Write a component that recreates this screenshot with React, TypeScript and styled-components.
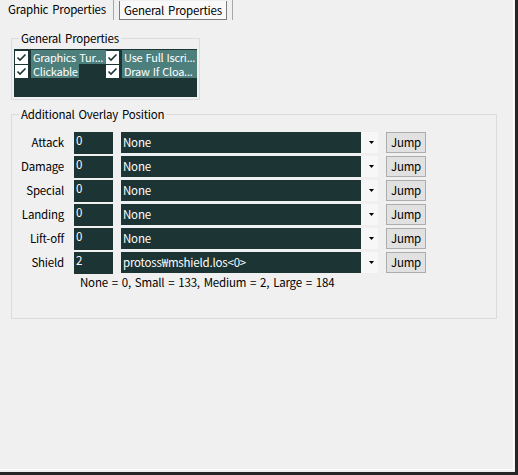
import React from "react";
import styled, { createGlobalStyle } from "styled-components";

const Global = createGlobalStyle`
  html, body { margin: 0; padding: 0; background: #f0f0f0; }
  body {
    font-family: "Noto Sans CJK KR", "Noto Sans", sans-serif;
    font-size: 11.5px;
    letter-spacing: -0.2px;
    word-spacing: 1.5px;
    color: #000;
  }
  * { box-sizing: border-box; }
`;

const DARK = "#1c3433";
const HILITE = "#4d807d";

const Window = styled.div`
  width: 518px;
  height: 475px;
  background: #f0f0f0;
  border-right: 3px solid #262626;
  border-bottom: 3px solid #262626;
`;

const Panel = styled.div`
  width: 514px;
  height: 470px;
  border-right: 1px solid #ffffff;
  border-bottom: 1px solid #ffffff;
  display: flex;
  flex-direction: column;
`;

const TabStrip = styled.div`
  height: 20px;
  display: flex;
  align-items: stretch;
`;

const Tab = styled.div<{ $active?: boolean }>`
  display: flex;
  align-items: center;
  line-height: 16px;
  white-space: nowrap;
  flex: none;
  ${(p) =>
    p.$active
      ? `
    padding: 0 5px 0 5px;
    border-left: 1px solid #a8a8a8;
    border-right: 1px solid #a8a8a8;
    background: #f0f0f0;
  `
      : `
    padding: 0 0 3px 8px;
    width: 113px;
    overflow: visible;
  `}
`;

const FocusBox = styled.span`
  display: flex;
  align-items: center;
  height: 19px;
  padding: 0 4px 0 4px;
  border: 1px solid #7c7c7c;
  border-top: none;
  background: #f9f9f9;
`;

const Content = styled.div`
  padding: 10px 0 0 11px;
  display: flex;
  flex-direction: column;
  gap: 6px;
`;

const Group = styled.fieldset<{ $w: number; $h: number; $pt: number }>`
  margin: 0;
  min-width: 0;
  width: ${(p) => p.$w}px;
  height: ${(p) => p.$h}px;
  border: 1px solid #dcdcdc;
  padding: ${(p) => p.$pt}px 1px 1px 2px;
`;

const Legend = styled.legend`
  margin-left: 5px;
  padding: 0 2px;
  line-height: 16px;
`;

const ListBox = styled.div`
  width: 183px;
  height: 48px;
  background: ${DARK};
  padding: 1px 0 0 1px;
  display: grid;
  grid-template-columns: 91px 91px;
  grid-auto-rows: 14px;
`;

const Item = styled.div`
  display: flex;
  align-items: center;
  gap: 3px;
  min-width: 0;
  overflow: hidden;
`;

const ItemText = styled.span<{ $fill?: boolean }>`
  background: ${HILITE};
  color: #fff;
  font-size: 11px;
  letter-spacing: -0.25px;
  word-spacing: 1px;
  line-height: 14px;
  height: 14px;
  padding: 0 1px 0 2px;
  white-space: nowrap;
  overflow: hidden;
  min-width: 0;
  ${(p) => (p.$fill ? "flex: 1;" : "")}
`;

const Rows = styled.div`
  display: grid;
  grid-template-columns: 52px 39px 257px 40px;
  grid-auto-rows: 21px;
  column-gap: 8px;
  row-gap: 3px;
  align-items: center;
`;

const Label = styled.div`
  text-align: right;
  padding-right: 2px;
  line-height: 16px;
  margin-top: -2px;
  white-space: nowrap;
`;

const NumBox = styled.div`
  height: 22px;
  background: ${DARK};
  color: #fff;
  padding: 0 2px;
  line-height: 16px;
  align-self: start;
`;

const Combo = styled.div`
  height: 21px;
  display: flex;
  align-items: stretch;
`;

const ComboValue = styled.div`
  flex: 1;
  background: ${DARK};
  color: #fff;
  padding: 0 2px;
  line-height: 20px;
  white-space: nowrap;
`;

const ComboArrow = styled.div`
  width: 17px;
  background: #f7f7f7;
  display: flex;
  align-items: center;
  justify-content: center;
  padding-left: 3px;
`;

const JumpButton = styled.button`
  height: 21px;
  width: 40px;
  margin: 0;
  padding: 0;
  background: #e1e1e1;
  border: 1px solid #adadad;
  font: inherit;
  letter-spacing: inherit;
  color: #000;
  line-height: 17px;
`;

const Note = styled.div`
  margin: 1px 0 0 66px;
  line-height: 16px;
`;

const Check = () => (
  <svg width="13" height="13" viewBox="0 0 13 13" style={{ flex: "none" }}>
    <rect x="0" y="0" width="13" height="13" fill="#fff" />
    <path d="M2.5 6.5 L5 9 L10.5 3.5" stroke={DARK} strokeWidth="1.6" fill="none" />
  </svg>
);

const Arrow = () => (
  <svg width="5" height="3" viewBox="0 0 5 3">
    <path d="M0 0 H5 L2.5 3 Z" fill="#000" />
  </svg>
);

const rows: [string, string, string][] = [
  ["Attack", "0", "None"],
  ["Damage", "0", "None"],
  ["Special", "0", "None"],
  ["Landing", "0", "None"],
  ["Lift-off", "0", "None"],
  ["Shield", "2", "protoss₩mshield.los<0>"],
];

export default function App() {
  return (
    <>
      <Global />
      <Window>
        <Panel>
          <TabStrip>
            <Tab>Graphic Properties</Tab>
            <Tab $active>
              <FocusBox>General Properties</FocusBox>
            </Tab>
          </TabStrip>
          <Content>
            <Group $w={189} $h={70} $pt={3}>
              <Legend>General Properties</Legend>
              <ListBox>
                <Item>
                  <Check />
                  <ItemText $fill>Graphics Tur...</ItemText>
                </Item>
                <Item>
                  <Check />
                  <ItemText $fill>Use Full Iscri...</ItemText>
                </Item>
                <Item>
                  <Check />
                  <ItemText>Clickable</ItemText>
                </Item>
                <Item>
                  <Check />
                  <ItemText $fill>Draw If Cloa...</ItemText>
                </Item>
              </ListBox>
            </Group>
            <Group $w={486} $h={213} $pt={10}>
              <Legend>Additional Overlay Position</Legend>
              <Rows>
                {rows.map(([label, num, value]) => (
                  <React.Fragment key={label}>
                    <Label>{label}</Label>
                    <NumBox>{num}</NumBox>
                    <Combo>
                      <ComboValue>{value}</ComboValue>
                      <ComboArrow>
                        <Arrow />
                      </ComboArrow>
                    </Combo>
                    <JumpButton>Jump</JumpButton>
                  </React.Fragment>
                ))}
              </Rows>
              <Note>None = 0, Small = 133, Medium = 2, Large = 184</Note>
            </Group>
          </Content>
        </Panel>
      </Window>
    </>
  );
}
